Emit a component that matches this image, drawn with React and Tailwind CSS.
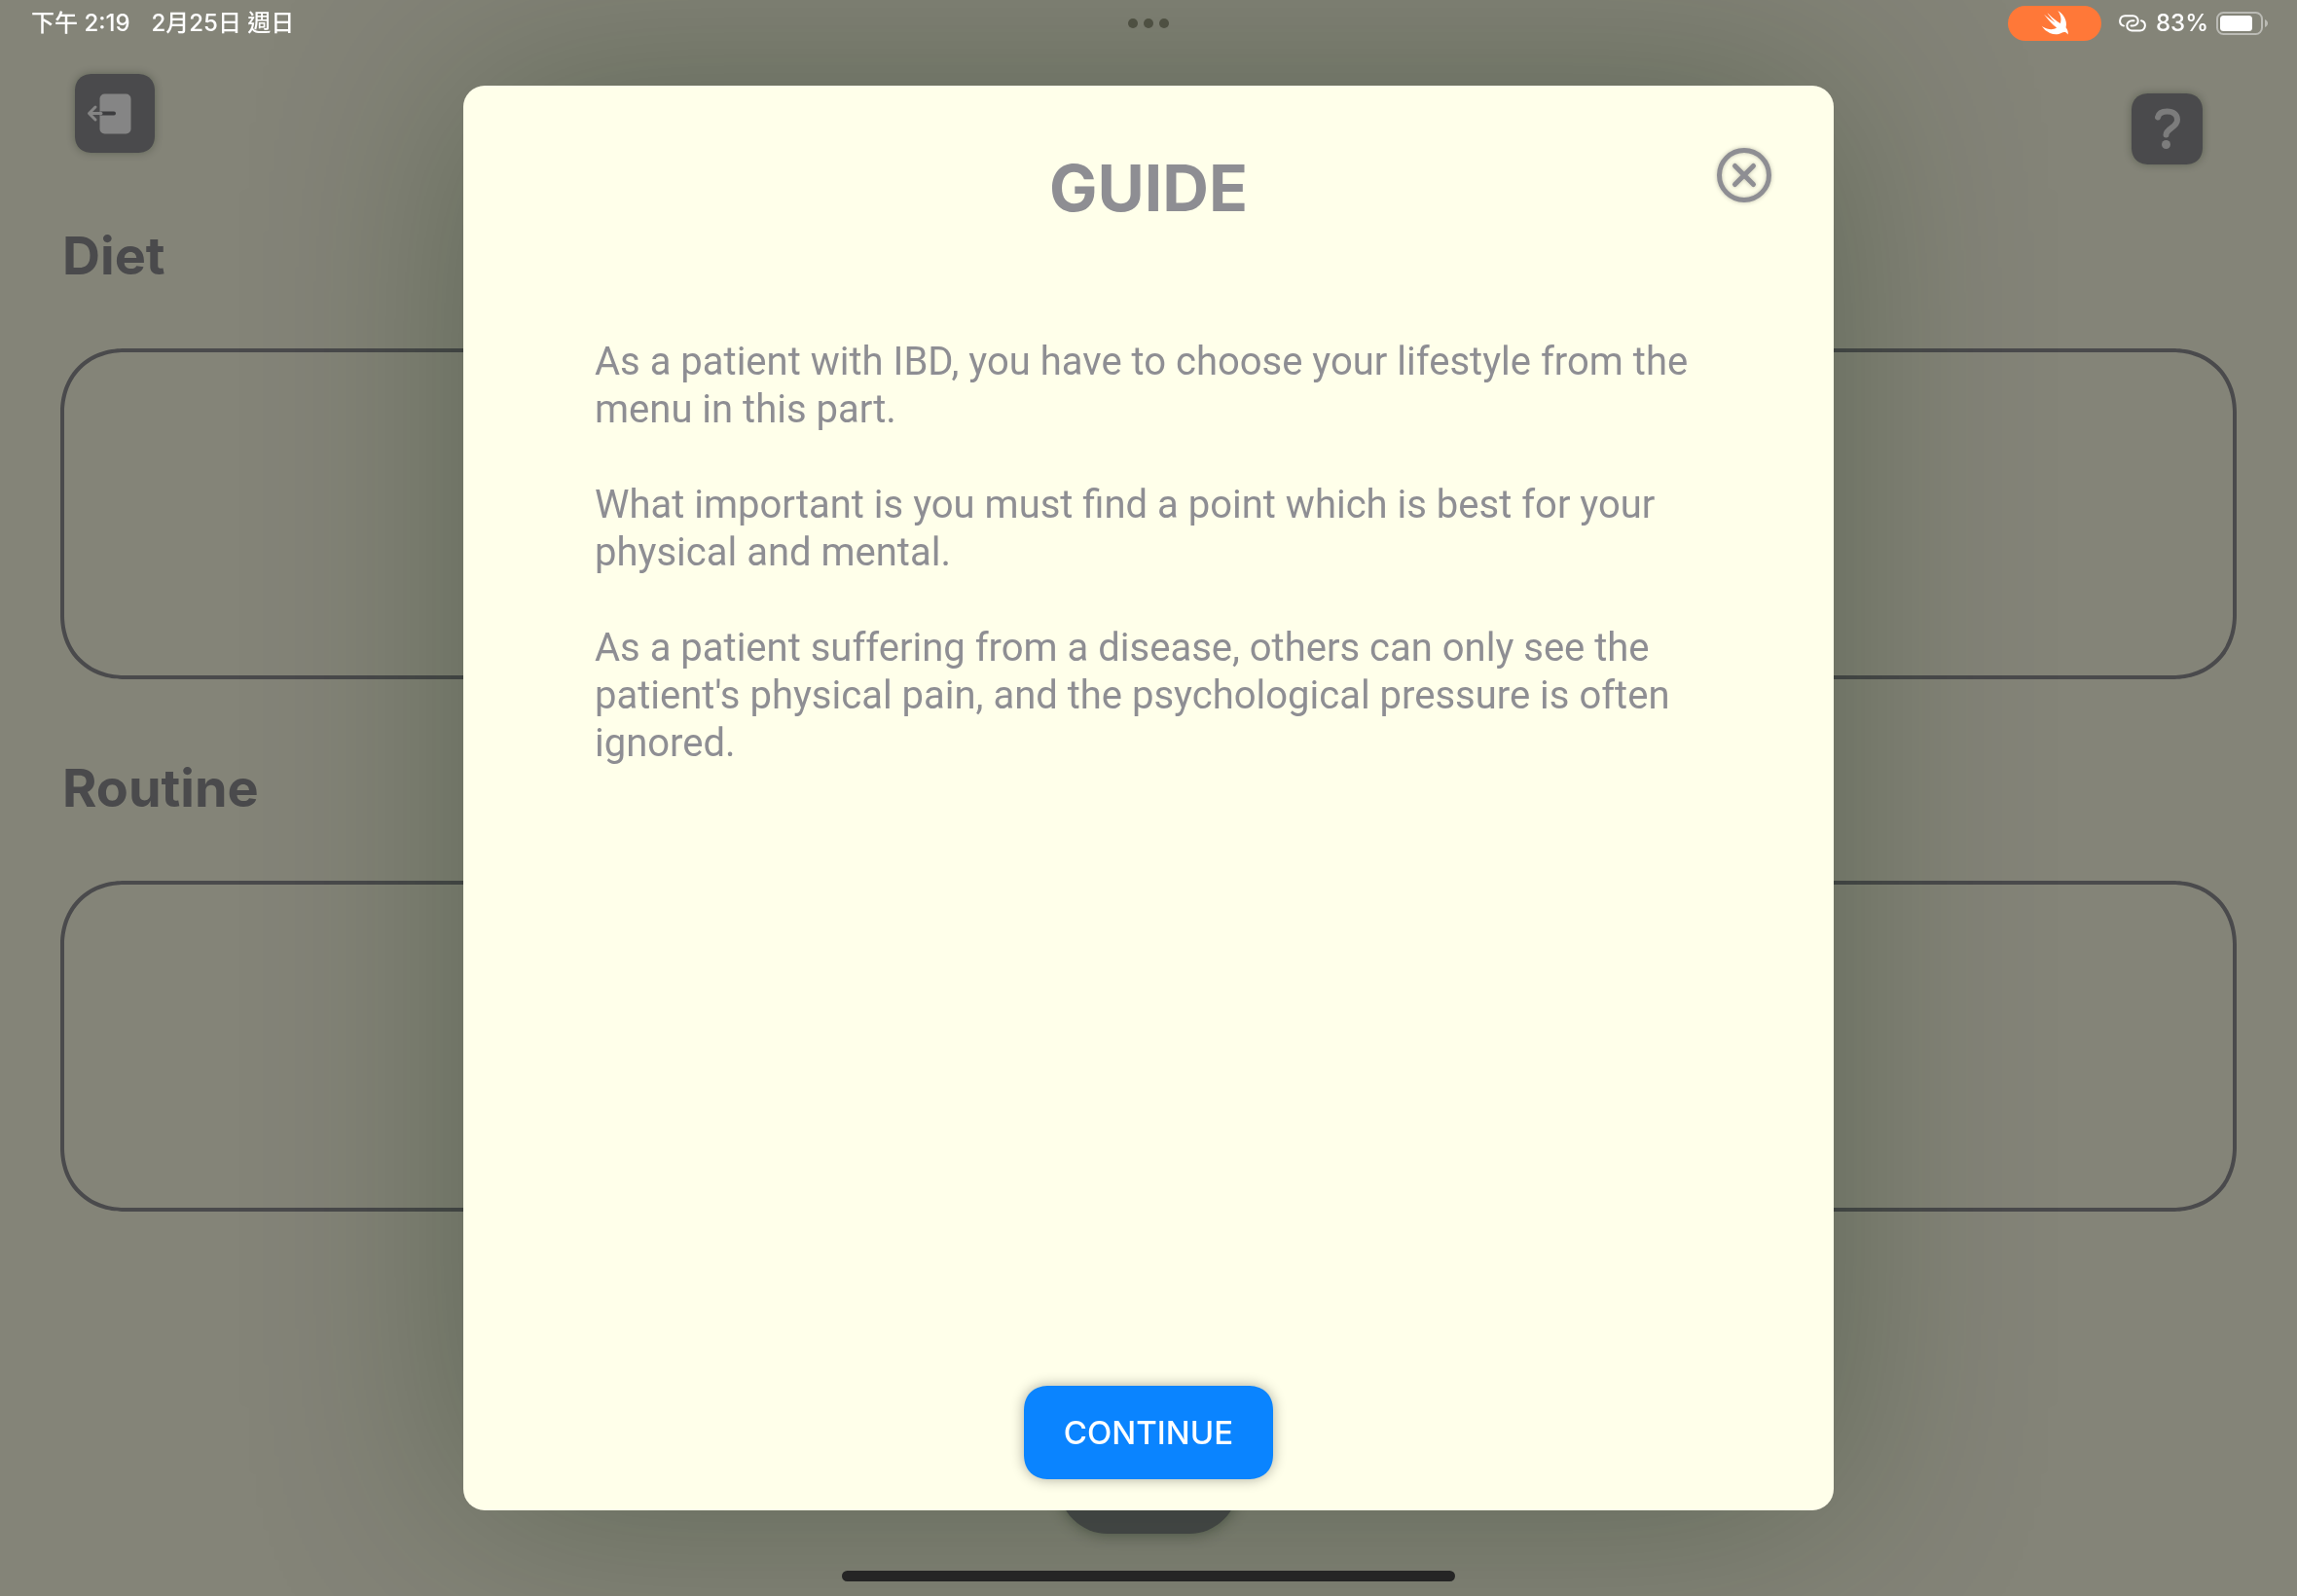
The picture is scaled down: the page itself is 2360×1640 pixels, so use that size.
function SwiftBird() {
  return (
    <svg viewBox="0 0 24 24" className="h-9 w-9" fill="white" aria-hidden="true">
      <path d="M13.543 3.41c4.114 2.47 6.545 7.162 5.549 11.131-.024.093-.05.181-.076.272l.002.001c2.062 2.538 1.5 5.258 1.236 4.745-1.072-2.086-3.066-1.568-4.088-1.043a6.803 6.803 0 0 1-.281.158l-.02.012-.002.002c-2.115 1.123-4.957 1.205-7.812-.022a12.568 12.568 0 0 1-5.64-4.838c.649.48 1.35.902 2.097 1.252 3.019 1.414 6.051 1.311 8.197-.002C9.651 12.73 7.101 9.67 5.146 7.191a10.628 10.628 0 0 1-1.005-1.384c2.34 2.142 6.038 4.83 7.365 5.576C8.69 8.408 6.208 4.743 6.324 4.86c4.436 4.466 8.527 6.996 8.527 6.996.154.085.27.154.36.213.085-.215.16-.437.224-.668.708-2.588-.09-5.548-1.893-7.992z" />
    </svg>
  );
}

function HotspotLink() {
  return (
    <svg viewBox="0 0 28 18" className="h-[18px] w-7" fill="none" stroke="white" strokeWidth="2" strokeLinecap="round" aria-hidden="true">
      <path d="M5 11.600A5.300 5.300 0 0 1 6.300 1.200H14.500A5.200 5.200 0 0 1 14.500 11.600H12.500" />
      <path d="M23 6.200A5.300 5.300 0 0 1 21.700 16.600H13.500A5.200 5.200 0 0 1 13.500 6.200H15.500" />
    </svg>
  );
}

function Battery() {
  return (
    <svg viewBox="0 0 54 24" className="h-6 w-[54px]" aria-hidden="true">
      <rect x="1" y="1" width="46" height="22" rx="6.500" fill="none" stroke="white" strokeOpacity="0.45" strokeWidth="2" />
      <rect x="4" y="4" width="33" height="16" rx="3.500" fill="white" />
      <path d="M50 8c4 1.500 4 6.500 0 8z" fill="white" fillOpacity="0.45" />
    </svg>
  );
}

function StatusBar() {
  return (
    <header className="relative z-20 flex h-12 items-center justify-between pt-1 pr-[29px] pb-5 pl-8 text-2xl leading-6 font-medium text-white">
      <div className="flex items-center gap-[22px] pt-4">
        <span>下午 2:19</span>
        <span>2月25日 週日</span>
      </div>
      <div className="absolute inset-x-0 top-[19px] mx-auto flex w-fit gap-1.5">
        <span className="size-2.5 rounded-full bg-[#4e5042]" />
        <span className="size-2.5 rounded-full bg-[#4e5042]" />
        <span className="size-2.5 rounded-full bg-[#4e5042]" />
      </div>
      <div className="flex items-center pt-4">
        <div className="mr-[18px] flex h-9 w-24 items-center justify-center rounded-full bg-[#ff7838] pl-0.5">
          <SwiftBird />
        </div>
        <HotspotLink />
        <span className="mr-2 ml-2.5">83%</span>
        <Battery />
      </div>
    </header>
  );
}

function Section({ title }) {
  return (
    <section>
      <h2 className="pt-0.5 pl-0.5 text-[54px] leading-[66px] font-bold text-[#4a4a4c]">{title}</h2>
      <div className="mt-[62px] h-[340px] rounded-[66px] border-4 border-[#4a4a4c] [corner-shape:superellipse(1.1)]" />
    </section>
  );
}

function GuideDialog() {
  return (
    <div className="fixed inset-0 z-10 flex items-center justify-center overflow-hidden">
      <div
        role="dialog"
        aria-modal="true"
        aria-labelledby="guide-title"
        className="relative flex min-h-[1464px] w-[1408px] max-w-full flex-col items-center rounded-[22px] bg-[#ffffea] px-[135px] pt-[63px] pb-8 shadow-[0_0_220px_rgba(6,34,4,0.30)]"
      >
        <h1 id="guide-title" className="text-[66px] leading-[84px] font-bold text-[#8e8e93]">GUIDE</h1>
        <button type="button" aria-label="Close" className="absolute top-16 right-16 size-14 drop-shadow-[0_0_2px_rgba(0,0,0,0.25)]">
          <svg viewBox="0 0 56 56" fill="none" stroke="#8e8e93" aria-hidden="true">
            <circle cx="28" cy="28" r="25.500" strokeWidth="5" />
            <path d="M18.500 18.500l19 19m0-19l-19 19" strokeWidth="5" strokeLinecap="round" />
          </svg>
        </button>
        <div className="mt-28 flex w-full flex-col gap-[49px] font-['Roboto',sans-serif] text-[40px] leading-[49px] text-[#8e8e93]">
          <p>As a patient with IBD, you have to choose your lifestyle from the menu in this part.</p>
          <p>What important is you must find a point which is best for your physical and mental.</p>
          <p>As a patient suffering from a disease, others can only see the patient's physical pain, and the psychological pressure is often ignored.</p>
        </div>
        <button type="button" className="mt-auto flex h-24 w-64 items-center justify-center rounded-[26px] bg-[#0a84ff] text-[33px] leading-10 font-medium text-white shadow-[0_0_14px_rgba(0,0,0,0.33)] [corner-shape:superellipse(1.2)]">
          CONTINUE
        </button>
      </div>
    </div>
  );
}

export default function App() {
  return (
    <div className="flex min-h-screen flex-col bg-[#848478] font-['Inter','Noto_Sans_CJK_TC',sans-serif]">
      <StatusBar />
      <main className="flex flex-1 flex-col px-[62px]">
        <div className="flex items-start justify-between pt-7 pr-[35px] pl-[15px]">
          <button type="button" aria-label="Exit" className="h-[81px] w-[82px] rounded-[18px] bg-[#4a4a4c] shadow-[0_0_8px_rgba(0,20,0,0.3)] [corner-shape:superellipse(1.2)]">
            <svg viewBox="0 0 82 81" fill="none" aria-hidden="true">
              <rect x="25.500" y="20.500" width="32" height="41" rx="5" fill="#858585" />
              <path d="M27 40.500h13" stroke="#3c3c3e" strokeWidth="4" strokeLinecap="round" />
              <path d="M27 40.500H15m6-6.500l-6.500 6.500 6.500 6.500" stroke="#858585" strokeWidth="3" strokeLinecap="round" strokeLinejoin="round" />
            </svg>
          </button>
          <button type="button" aria-label="Help" className="mt-5 size-[73px] rounded-[18px] bg-[#4a4a4c] shadow-[0_0_8px_rgba(0,20,0,0.3)] [corner-shape:superellipse(1.2)]">
            <svg viewBox="0 0 73 73" fill="none" aria-hidden="true">
              <path d="M27 24.500c1-4.500 5-6 9.500-6 6 0 10.500 3 10.500 8.500 0 4-2.500 6-6 8.500-3.500 2.500-5.500 4.500-5.500 7" stroke="#7c7c7c" strokeWidth="6" strokeLinecap="round" strokeLinejoin="round" />
              <circle cx="35.500" cy="52.500" r="4.500" fill="#7c7c7c" />
            </svg>
          </button>
        </div>
        <div className="mt-[59px] flex flex-col gap-[77px]">
          <Section title="Diet" />
          <Section title="Routine" />
        </div>
        <button type="button" aria-label="Next" className="mx-auto mt-auto mb-16 h-28 w-46 rounded-[50px] bg-[#4a4a4c] shadow-[0_0_16px_rgba(0,20,0,0.4)]" />
      </main>
      <div className="fixed inset-x-0 bottom-[15px] z-20 mx-auto h-[11px] w-[630px] rounded-full bg-[#252525]" />
      <GuideDialog />
    </div>
  );
}
